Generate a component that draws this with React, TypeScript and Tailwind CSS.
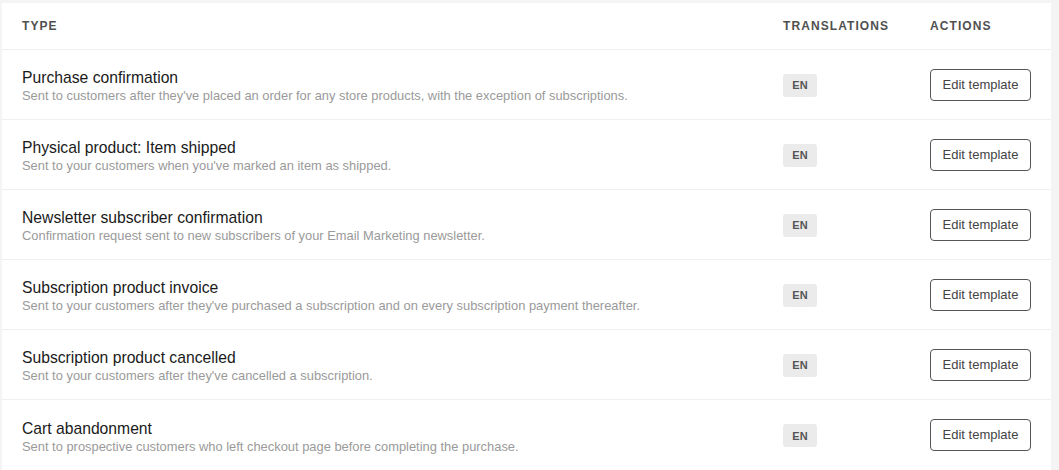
import React from 'react';

const templates = [
  {
    title: 'Purchase confirmation',
    description:
      "Sent to customers after they've placed an order for any store products, with the exception of subscriptions.",
  },
  {
    title: 'Physical product: Item shipped',
    description: "Sent to your customers when you've marked an item as shipped.",
  },
  {
    title: 'Newsletter subscriber confirmation',
    description: 'Confirmation request sent to new subscribers of your Email Marketing newsletter.',
  },
  {
    title: 'Subscription product invoice',
    description:
      "Sent to your customers after they've purchased a subscription and on every subscription payment thereafter.",
  },
  {
    title: 'Subscription product cancelled',
    description: "Sent to your customers after they've cancelled a subscription.",
  },
  {
    title: 'Cart abandonment',
    description: 'Sent to prospective customers who left checkout page before completing the purchase.',
  },
];

const App = () => {
  return (
    <div className="min-h-[470px] w-[1059px] bg-[#f4f4f4] pt-[3px] pl-[2px] font-['Liberation_Sans','Arial',sans-serif]">
      <div className="w-[1049px] bg-white">
        {/* Header */}
        <div className="flex h-[47px] items-center border-b border-[#efefef] text-[12px] font-bold tracking-[0.09em] text-[#505050]">
          <div className="flex-1 pl-[20px]">TYPE</div>
          <div className="w-[147px]">TRANSLATIONS</div>
          <div className="w-[121px]">ACTIONS</div>
        </div>

        {templates.map((t, i) => (
          <div
            key={t.title}
            className={`flex h-[70px] items-center ${i < templates.length - 1 ? 'border-b border-[#efefef]' : ''}`}
          >
            <div className="flex-1 pl-[20px] pt-[4px]">
              <div className="text-[15.7px] leading-[18px] text-[#1a1a1a]">{t.title}</div>
              <div className="text-[12.9px] leading-[16px] mt-[1px] text-[#9a9a9a]">{t.description}</div>
            </div>
            <div className="w-[147px]">
              <span className="inline-flex h-[23px] w-[34px] items-center justify-center rounded-[3px] bg-[#ebebeb] text-[11px] font-bold text-[#555]">
                EN
              </span>
            </div>
            <div className="w-[121px]">
              <button className="h-[32px] w-[101px] rounded-[4px] border border-[#555] bg-white text-[13px] text-[#444]">
                Edit template
              </button>
            </div>
          </div>
        ))}
      </div>
    </div>
  );
};

export default App;
